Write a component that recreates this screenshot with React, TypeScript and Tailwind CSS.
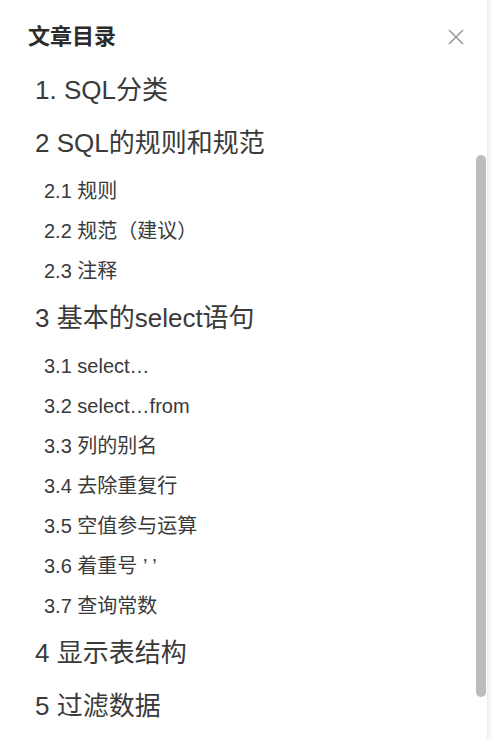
const toc = [
  { level: 1, text: '1. SQL分类' },
  {
    level: 1,
    text: '2 SQL的规则和规范',
    children: ['2.1 规则', '2.2 规范（建议）', '2.3 注释'],
  },
  {
    level: 1,
    text: '3 基本的select语句',
    children: [
      '3.1 select…',
      '3.2 select…from',
      '3.3 列的别名',
      '3.4 去除重复行',
      '3.5 空值参与运算',
      '3.6 着重号 ’ ’',
      '3.7 查询常数',
    ],
  },
  { level: 1, text: '4 显示表结构' },
  { level: 1, text: '5 过滤数据' },
]

const App = () => {
  return (
    <div className="relative flex h-[739px] w-[491px] overflow-hidden bg-white font-['Liberation_Sans','Noto_Sans_CJK_SC',sans-serif] text-[#3a3a3a]">
      <div className="flex w-[487px] flex-col">
        {/* header */}
        <div className="flex h-[63.5px] items-start justify-between pr-[23px] pl-[28px] pt-[26px]">
          <div className="text-[22px] leading-[22px] font-bold text-[#2b2b2b]">文章目录</div>
          <div className="flex h-[22px] items-center">
            <svg width="16" height="16" viewBox="0 0 16 16" fill="none" stroke="#9a9a9a" strokeWidth="1.6">
              <path d="M1 1 L15 15 M15 1 L1 15" />
            </svg>
          </div>
        </div>

        {/* list */}
        <div className="flex flex-col">
          {toc.map((item) => (
            <div key={item.text}>
              <div className="flex h-[53px] items-center pl-[35px] text-[26px] leading-none whitespace-nowrap">
                {item.text}
              </div>
              {item.children && (
                <div className="py-[1px]">
                  {item.children.map((c) => (
                    <div key={c} className="flex h-[40px] items-center pl-[44px] text-[20px] leading-none whitespace-nowrap">
                      {c}
                    </div>
                  ))}
                </div>
              )}
            </div>
          ))}
        </div>
      </div>

      {/* right edge */}
      <div className="w-[4px] border-l border-[#ececec] bg-[#f5f5f5]" />

      {/* scrollbar thumb */}
      <div className="absolute top-[155px] left-[476px] h-[542px] w-[10px] rounded-full bg-[#bcbcbc]" />
    </div>
  )
}

export default App
